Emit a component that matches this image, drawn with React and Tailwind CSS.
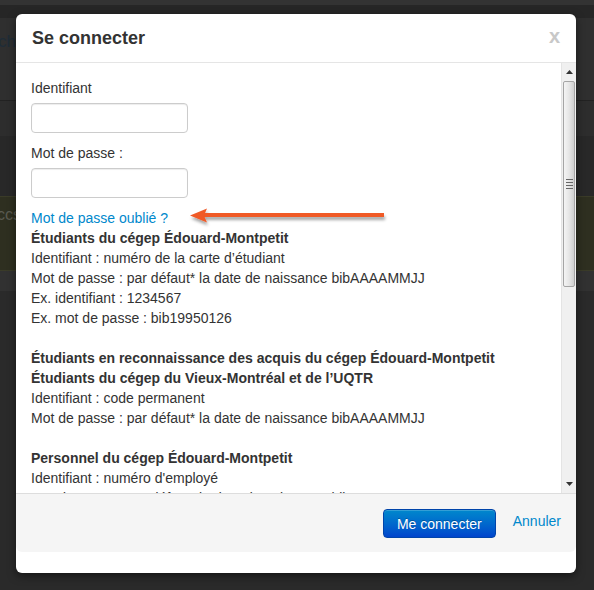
import React from "react";

const Line = ({ children, bold }) => (
    <div className={bold ? "font-bold" : ""}>{children}</div>
);

const FakeScrollbar = () => (
    <div className="w-[15px] flex flex-col bg-[#f0f0f0] border-l border-[#e4e4e4]">
        {/* up arrow */}
        <div className="h-[18px] flex items-center justify-center">
            <svg width="7" height="4" viewBox="0 0 7 4">
                <path d="M0 4 L3.5 0 L7 4 Z" fill="#333" />
            </svg>
        </div>
        {/* thumb */}
        <div className="h-[206px] mx-[1px] rounded-[2px] border border-[#a5a5a5] bg-gradient-to-r from-[#f4f4f4] via-[#e6e6e6] to-[#cfcfcf] flex items-center justify-center">
            <div className="flex flex-col gap-[2px] w-[7px]">
                <div className="h-[1px] bg-[#666]" />
                <div className="h-[1px] bg-[#666]" />
                <div className="h-[1px] bg-[#666]" />
                <div className="h-[1px] bg-[#666]" />
            </div>
        </div>
        <div className="flex-1" />
        {/* down arrow */}
        <div className="h-[18px] flex items-center justify-center">
            <svg width="7" height="4" viewBox="0 0 7 4">
                <path d="M0 0 L3.5 4 L7 0 Z" fill="#333" />
            </svg>
        </div>
    </div>
);

export default function App() {
    return (
        <div
            className="relative w-[594px] h-[590px] overflow-hidden bg-[#2a2a2a] text-[14px] leading-[20px] text-[#333]"
            style={{ fontFamily: "'Liberation Sans', Arial, sans-serif" }}
        >
            {/* page behind the overlay */}
            <div className="flex flex-col">
                <div className="h-[5px] bg-[#333]" />
                <div className="h-[13px] bg-[#262626]" />
                <div className="h-[82px] bg-[#2f2f2f] flex items-start text-[17px] text-[#1e2c38]">
                    <span className="-ml-[2px] mt-[14px]">ch</span>
                </div>
                <div className="h-[1px] bg-[#222]" />
                <div className="h-[35px] bg-[#2d2d2d]" />
                <div className="h-[60px] bg-[#282828]" />
                <div className="h-[75px] bg-[#2e2f20] border-y border-[#3a3b28] flex items-start text-[16px] text-[#5a5a50]">
                    <span className="-ml-[3px] mt-[8px]">ccs</span>
                </div>
                <div className="h-[20px] bg-[#313131]" />
            </div>

            {/* modal */}
            <div className="absolute left-[16px] top-[14px] w-[560px] h-[559px] bg-white rounded-[6px] shadow-[0_3px_9px_rgba(0,0,0,0.5)] flex flex-col">
                {/* header */}
                <div className="h-[49px] shrink-0 border-b border-[#e5e5e5] flex items-center justify-between pl-[16px] pr-[16px]">
                    <h3 className="text-[18px] font-bold text-[#333] leading-[20px]">
                        Se connecter
                    </h3>
                    <span className="text-[20px] font-bold text-[#c8c8c8] leading-[20px] -mt-[4px]">
                        x
                    </span>
                </div>

                {/* body */}
                <div className="h-[430px] shrink-0 flex">
                    <div className="flex-1 overflow-hidden pl-[15px] pt-[15px]">
                        <label className="block">Identifiant</label>
                        <input
                            type="text"
                            className="block mt-[5px] w-[157px] h-[30px] border border-[#cccccc] rounded-[4px] shadow-[inset_0_1px_1px_rgba(0,0,0,0.075)] bg-white"
                        />
                        <label className="block mt-[10px]">Mot de passe :</label>
                        <input
                            type="password"
                            className="block mt-[5px] w-[157px] h-[30px] border border-[#cccccc] rounded-[4px] shadow-[inset_0_1px_1px_rgba(0,0,0,0.075)] bg-white"
                        />
                        <a className="block mt-[10px] text-[#0088cc]">Mot de passe oublié ?</a>

                        <Line bold>Étudiants du cégep Édouard-Montpetit</Line>
                        <Line>Identifiant : numéro de la carte d’étudiant</Line>
                        <Line>Mot de passe : par défaut* la date de naissance bibAAAAMMJJ</Line>
                        <Line>Ex. identifiant : 1234567</Line>
                        <Line>Ex. mot de passe : bib19950126</Line>
                        <div className="h-[20px]" />
                        <Line bold>Étudiants en reconnaissance des acquis du cégep Édouard-Montpetit</Line>
                        <Line bold>Étudiants du cégep du Vieux-Montréal et de l’UQTR</Line>
                        <Line>Identifiant : code permanent</Line>
                        <Line>Mot de passe : par défaut* la date de naissance bibAAAAMMJJ</Line>
                        <div className="h-[20px]" />
                        <Line bold>Personnel du cégep Édouard-Montpetit</Line>
                        <Line>Identifiant : numéro d'employé</Line>
                        <Line>Mot de passe : par défaut* la date de naissance bibAAAAMMJJ</Line>
                    </div>
                    <FakeScrollbar />
                </div>

                {/* footer */}
                <div className="h-[59px] shrink-0 bg-[#f5f5f5] border-t border-[#dddddd] rounded-b-[6px] flex justify-end items-start pt-[15px] pr-[15px] gap-[17px]">
                    <button className="h-[29px] px-[13px] rounded-[4px] border border-[#0044aa] bg-gradient-to-b from-[#0088cc] to-[#0044cc] text-white text-[14px] leading-[20px] [text-shadow:0_-1px_0_rgba(0,0,0,0.25)] shadow-[inset_0_1px_0_rgba(255,255,255,0.2)]">
                        Me connecter
                    </button>
                    <a className="text-[#0088cc] leading-[20px] pt-[2px]">Annuler</a>
                </div>
            </div>

            {/* annotation arrow */}
            <svg
                className="absolute left-0 top-0 pointer-events-none"
                width="594"
                height="590"
                viewBox="0 0 594 590"
            >
                <defs>
                    <filter id="arrowShadow" x="-10%" y="-100%" width="120%" height="400%">
                        <feDropShadow dx="1" dy="3" stdDeviation="1.5" floodColor="#000" floodOpacity="0.35" />
                    </filter>
                </defs>
                <g filter="url(#arrowShadow)" fill="#f05a28">
                    <rect x="202" y="213" width="182" height="4" />
                    <path d="M190 215.5 L207 208.5 L204 215.5 L207 222.5 Z" />
                </g>
            </svg>
        </div>
    );
}
